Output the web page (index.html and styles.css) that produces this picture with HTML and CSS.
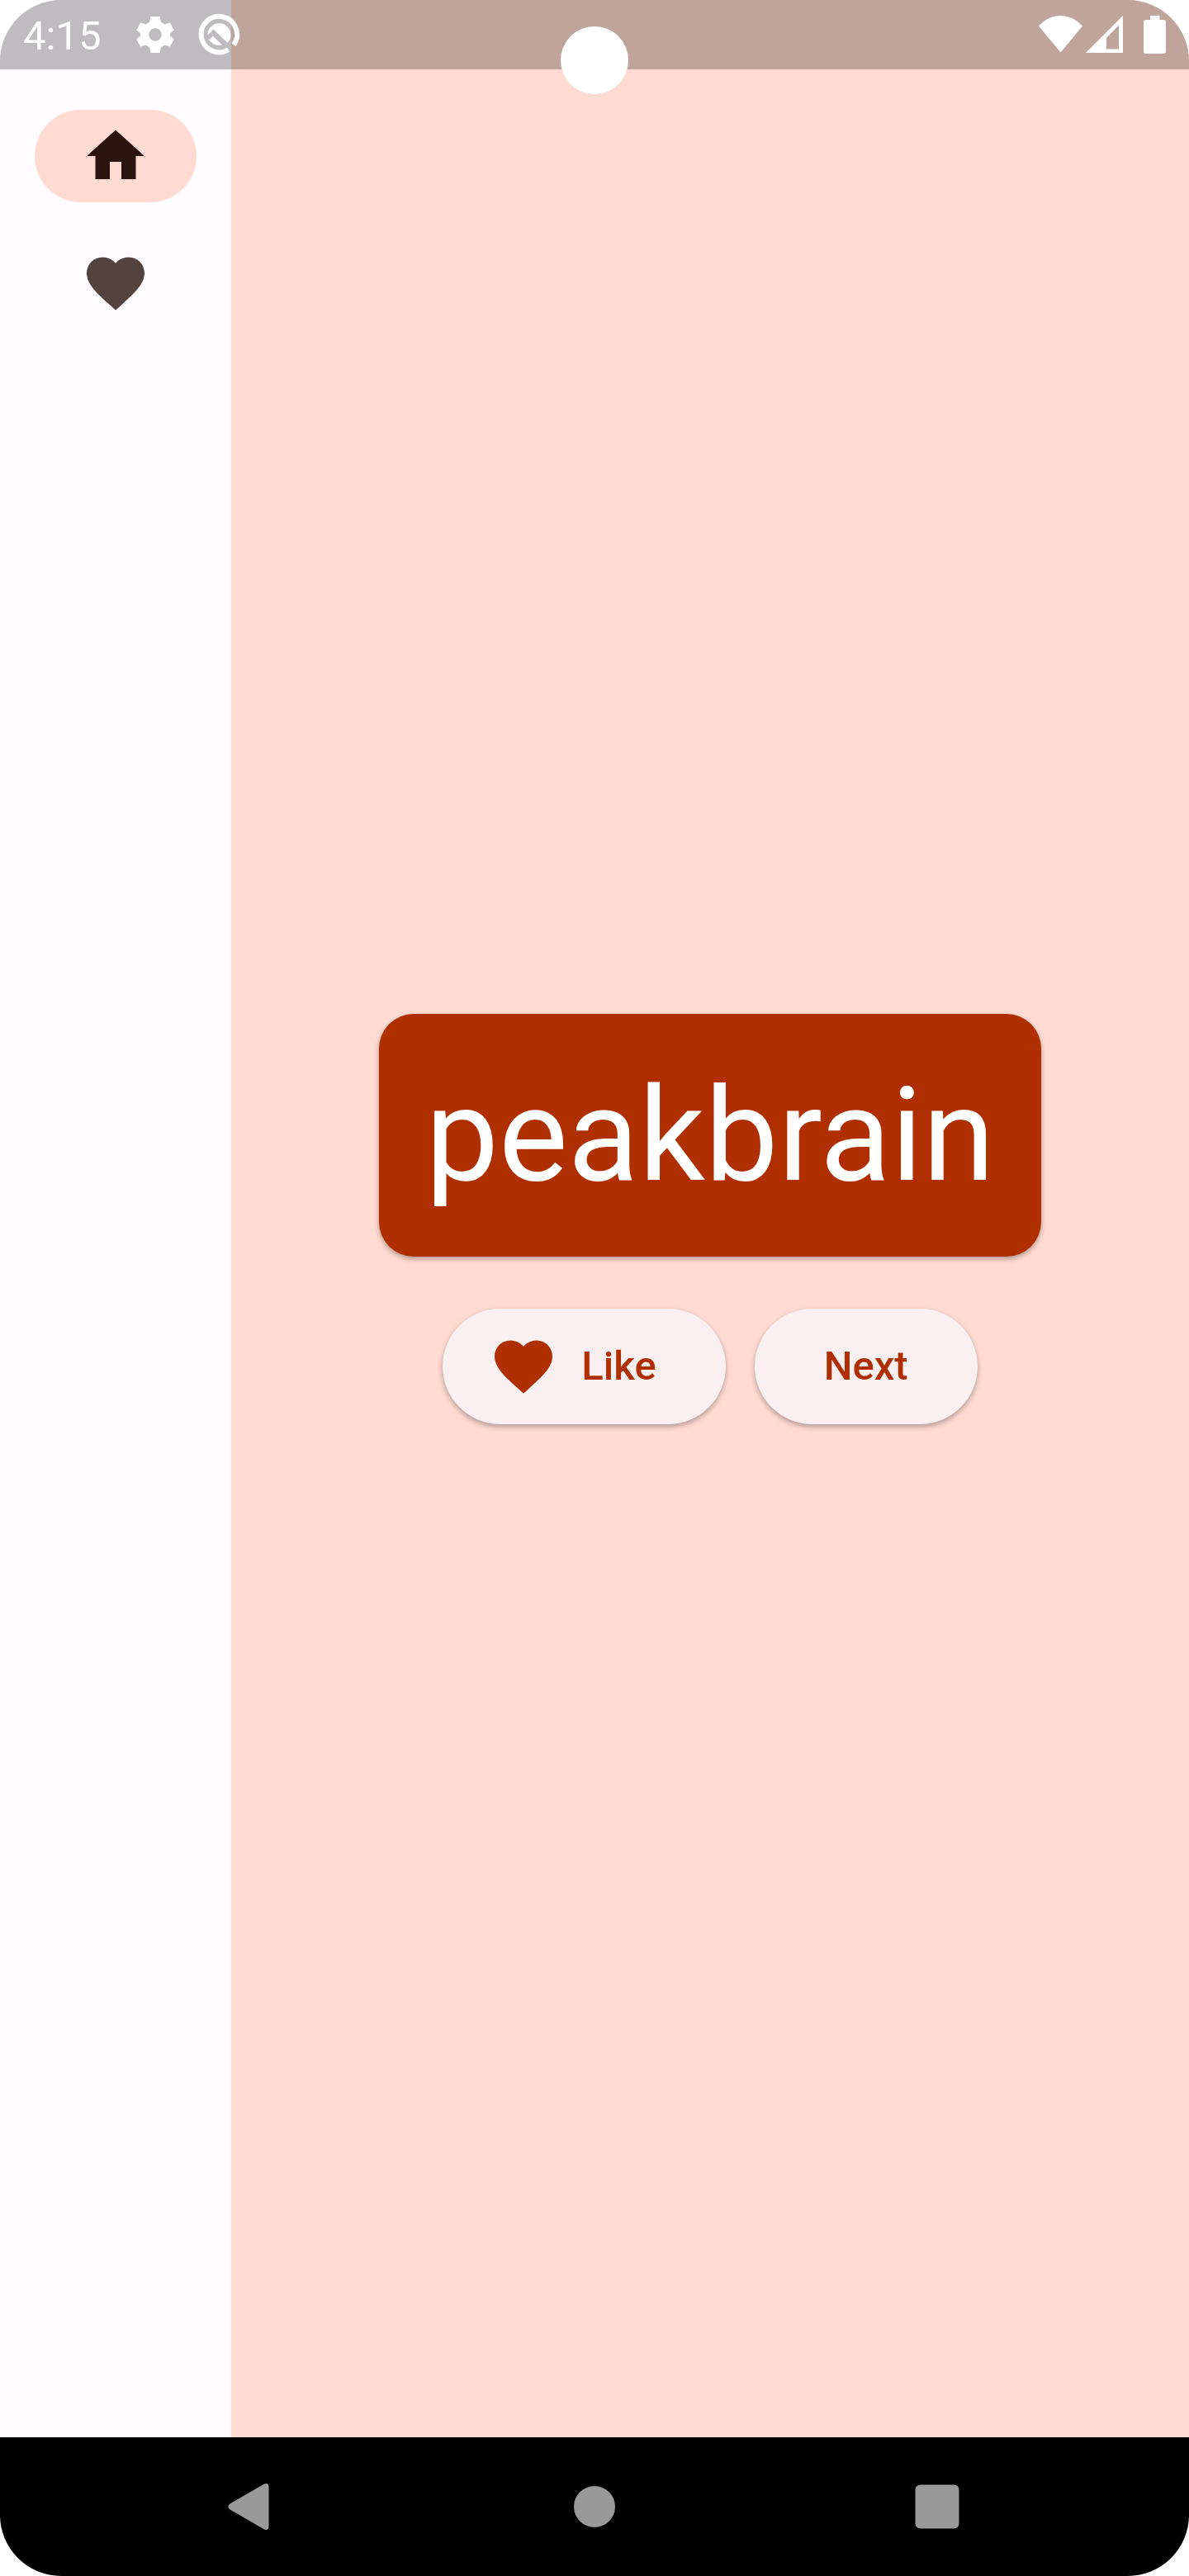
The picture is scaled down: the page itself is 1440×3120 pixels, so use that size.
FILE: index.html
```html
<!DOCTYPE html>
<html lang="en">
<head>
<meta charset="utf-8">
<meta name="viewport" content="width=device-width, initial-scale=1">
<title>Word pairs</title>
<link rel="stylesheet" href="styles.css">
</head>
<body>
<div class="device">
  <header class="status-bar">
    <time class="clock">4:15</time>
    <div class="notifications">
      <svg class="notice-icon" viewBox="0 0 56 56" aria-hidden="true"><path fill-rule="evenodd" d="M22.500 6h11l1.500 6.800 4.500 2.600 6.300-2 5 8.800-4.800 4.300v3l4.800 4.300-5 8.800-6.300-2-4.500 2.600-1.500 6.800h-11l-1.500-6.800-4.500-2.600-6.300 2-5-8.800 4.800-4.300v-3l-4.800-4.300 5-8.800 6.300 2 4.500-2.600zM28 20.300a7.700 7.700 0 1 0 0 15.400a7.700 7.700 0 1 0 0-15.400z"/></svg>
      <svg class="notice-icon" viewBox="0 0 56 56" aria-hidden="true"><path class="ring" d="M39.500 46.200A21.700 21.700 0 1 1 46 40.200"/><path d="M18.500 18.500A13.200 13.200 0 0 1 38.500 37.800L21.500 21.500L14.500 28.500Q14.300 22.500 18.500 18.500zM20.500 29.500L32 40.300Q23 43 16.300 34.500z"/></svg>
    </div>
    <div class="signals">
      <svg class="wifi" viewBox="0 0 53 46" aria-hidden="true"><path d="M0 12.500Q11.500 0 26.500 0T53 12.500L26.500 44.500z"/></svg>
      <svg class="cell" viewBox="0 0 45 46" aria-hidden="true"><path fill-rule="evenodd" d="M0 45L45 0V45zM25 27V40.500H40V11.500z"/></svg>
      <svg class="battery" viewBox="0 0 27 46" aria-hidden="true"><path d="M8 0H19.500V5H24Q27 5 27 8V43Q27 46 24 46H3Q0 46 0 43V8Q0 5 3 5H8z"/></svg>
    </div>
    <span class="camera"></span>
  </header>

  <div class="app">
    <nav class="rail" aria-label="Main">
      <a class="destination selected" href="#home" aria-label="Home" aria-current="page">
        <svg class="icon" viewBox="0 0 24 24" aria-hidden="true"><path d="M10 20v-6h4v6h5v-8h3L12 3 2 12h3v8z"/></svg>
      </a>
      <a class="destination" href="#favorites" aria-label="Favorites">
        <svg class="icon" viewBox="0 0 24 24" aria-hidden="true"><path d="M12 21.350l-1.450-1.320C5.400 15.360 2 12.280 2 8.500 2 5.420 4.420 3 7.500 3c1.740 0 3.410.81 4.500 2.090C13.090 3.810 14.760 3 16.500 3 19.580 3 22 5.420 22 8.500c0 3.780-3.400 6.860-8.550 11.540L12 21.350z"/></svg>
      </a>
    </nav>
    <main class="page">
      <h1 class="word-card">peakbrain</h1>
      <div class="actions">
        <button class="button with-icon" type="button">
          <svg class="icon" viewBox="0 0 24 24" aria-hidden="true"><path d="M12 21.350l-1.450-1.320C5.400 15.360 2 12.280 2 8.500 2 5.420 4.420 3 7.500 3c1.740 0 3.410.81 4.500 2.090C13.090 3.810 14.760 3 16.500 3 19.580 3 22 5.420 22 8.500c0 3.780-3.400 6.860-8.550 11.540L12 21.350z"/></svg>
          <span>Like</span>
        </button>
        <button class="button" type="button">Next</button>
      </div>
    </main>
  </div>

  <footer class="system-nav">
    <button class="system-button" type="button" aria-label="Back"><svg class="icon" viewBox="0 0 84 84" aria-hidden="true"><path d="M15.500 38.500L57 14.600Q62 12.500 62.500 17V67Q62 71.500 57 69.400L15.500 45.500Q11.500 42 15.500 38.500z"/></svg></button>
    <button class="system-button" type="button" aria-label="Home"><svg class="icon" viewBox="0 0 84 84" aria-hidden="true"><circle cx="42" cy="42" r="25"/></svg></button>
    <button class="system-button" type="button" aria-label="Overview"><svg class="icon" viewBox="0 0 84 84" aria-hidden="true"><rect x="15.500" y="15.500" width="53" height="53" rx="6"/></svg></button>
  </footer>
</div>
</body>
</html>
```
FILE: styles.css
```css
* {
  box-sizing: border-box;
}

body {
  margin: 0;
  background: #fff;
  font-family: Roboto, "Liberation Sans", sans-serif;
}

svg {
  display: block;
  flex: none;
  fill: currentColor;
}

button {
  border: 0;
  font: inherit;
  cursor: pointer;
}

.device {
  position: relative;
  display: flex;
  flex-direction: column;
  min-height: 100vh;
  border-radius: 74px;
  overflow: hidden;
}

/* System status bar, drawn over the app */
.status-bar {
  position: absolute;
  inset: 0 0 auto;
  display: flex;
  align-items: center;
  height: 84px;
  padding: 0 28px;
  background: rgba(0, 0, 0, 0.25);
  color: #fff;
}

.clock {
  padding-top: 4px;
  font-size: 49px;
  line-height: 56px;
}

.notifications {
  display: flex;
  gap: 21px;
  margin-left: 38px;
}

.notice-icon {
  width: 56px;
  height: 56px;
}

.ring {
  fill: none;
  stroke: currentColor;
  stroke-width: 6;
}

.signals {
  display: flex;
  margin-left: auto;
}

.signals svg {
  height: 46px;
}

.wifi {
  width: 53px;
}

.cell {
  width: 45px;
  margin: 0 25px 0 4px;
}

.battery {
  width: 27px;
}

.camera {
  position: absolute;
  top: 32px;
  left: calc(50% - 41px);
  width: 82px;
  height: 82px;
  border-radius: 50%;
  background: #fff;
}

/* App */
.app {
  flex: 1;
  display: flex;
}

.rail {
  flex: none;
  display: flex;
  flex-direction: column;
  align-items: center;
  gap: 42px;
  width: 280px;
  padding-top: 133px;
  background: #fffbff;
}

.destination {
  display: flex;
  align-items: center;
  justify-content: center;
  width: 196px;
  height: 112px;
  border-radius: 56px;
  color: #53433f;
}

.selected {
  background: #ffdbd1;
  color: #2c150f;
}

.icon {
  width: 84px;
  height: 84px;
}

.page {
  flex: 1;
  display: flex;
  flex-direction: column;
  align-items: center;
  justify-content: center;
  gap: 63px;
  background: #ffdbd1;
}

.word-card {
  margin: 0;
  padding: 56px;
  border-radius: 42px;
  background: #b02f00;
  color: #fff;
  font-size: 158px;
  font-weight: 400;
  line-height: 182px;
  box-shadow: 0 3px 6px rgba(0, 0, 0, 0.3);
}

.actions {
  display: flex;
  gap: 35px;
}

.button {
  display: flex;
  align-items: center;
  gap: 28px;
  height: 140px;
  padding: 0 84px;
  border-radius: 70px;
  background: #faf0f2;
  color: #b02f00;
  font-size: 49px;
  font-weight: 500;
  line-height: 70px;
  box-shadow: 0 3px 6px rgba(0, 0, 0, 0.3);
}

.with-icon {
  padding-left: 56px;
}

/* System navigation bar */
.system-nav {
  display: grid;
  grid-template-columns: repeat(3, 1fr);
  justify-items: center;
  padding: 42px 97px;
  background: #000;
}

.system-button {
  padding: 0;
  background: none;
  color: #999;
}
```
